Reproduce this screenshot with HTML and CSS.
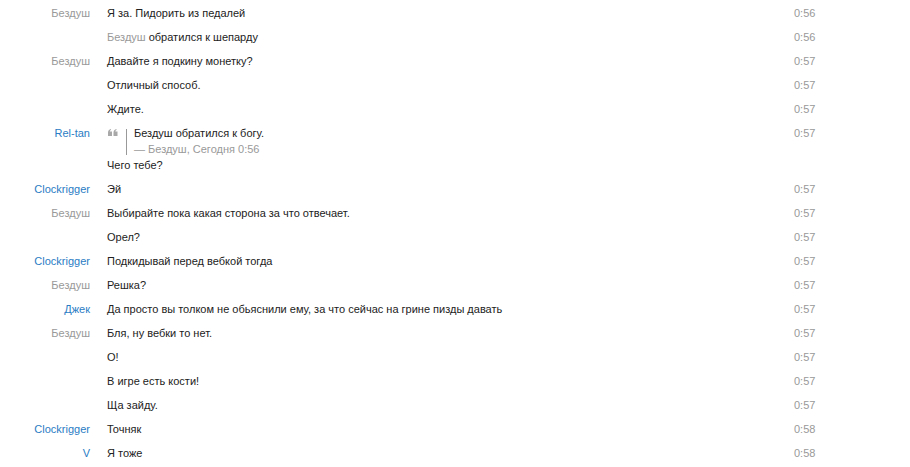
FILE: index.html
```html
<!DOCTYPE html>
<html>
<head>
<meta charset="utf-8">
<link rel="stylesheet" href="styles.css">
</head>
<body>
<div class="chat">
  <div class="row"><div class="name gray">Бездуш</div><div class="msg">Я за. Пидорить из педалей</div><div class="time">0:56</div></div>
  <div class="row"><div class="name"></div><div class="msg"><span class="gray">Бездуш</span> обратился к шепарду</div><div class="time">0:56</div></div>
  <div class="row"><div class="name gray">Бездуш</div><div class="msg">Давайте я подкину монетку?</div><div class="time">0:57</div></div>
  <div class="row"><div class="name"></div><div class="msg">Отличный способ.</div><div class="time">0:57</div></div>
  <div class="row"><div class="name"></div><div class="msg">Ждите.</div><div class="time">0:57</div></div>
  <div class="row"><div class="name blue">Rel-tan</div><div class="msg">
    <div class="quote">
      <div class="qicon"><svg width="10" height="7" viewBox="0 0 10 7"><path d="M0 3.5 Q0 0.5 3 0 L3 1 Q1.8 1.4 1.8 2.6 L4 2.6 L4 7 L0 7 Z M5.5 3.5 Q5.5 0.5 8.5 0 L8.5 1 Q7.3 1.4 7.3 2.6 L9.5 2.6 L9.5 7 L5.5 7 Z" fill="#a8a8a8"/></svg></div>
      <div class="qbody"><div class="qtext">Бездуш обратился к богу.</div><div class="qsrc">— Бездуш, Сегодня 0:56</div></div>
    </div>
    <div>Чего тебе?</div>
  </div><div class="time">0:57</div></div>
  <div class="row"><div class="name blue">Clockrigger</div><div class="msg">Эй</div><div class="time">0:57</div></div>
  <div class="row"><div class="name gray">Бездуш</div><div class="msg">Выбирайте пока какая сторона за что отвечает.</div><div class="time">0:57</div></div>
  <div class="row"><div class="name"></div><div class="msg">Орел?</div><div class="time">0:57</div></div>
  <div class="row"><div class="name blue">Clockrigger</div><div class="msg">Подкидывай перед вебкой тогда</div><div class="time">0:57</div></div>
  <div class="row"><div class="name gray">Бездуш</div><div class="msg">Решка?</div><div class="time">0:57</div></div>
  <div class="row"><div class="name blue">Джек</div><div class="msg">Да просто вы толком не обьяснили ему, за что сейчас на грине пизды давать</div><div class="time">0:57</div></div>
  <div class="row"><div class="name gray">Бездуш</div><div class="msg">Бля, ну вебки то нет.</div><div class="time">0:57</div></div>
  <div class="row"><div class="name"></div><div class="msg">О!</div><div class="time">0:57</div></div>
  <div class="row"><div class="name"></div><div class="msg">В игре есть кости!</div><div class="time">0:57</div></div>
  <div class="row"><div class="name"></div><div class="msg">Ща зайду.</div><div class="time">0:57</div></div>
  <div class="row"><div class="name blue">Clockrigger</div><div class="msg">Точняк</div><div class="time">0:58</div></div>
  <div class="row"><div class="name blue">V</div><div class="msg">Я тоже</div><div class="time">0:58</div></div>
</div>
</body>
</html>
```
FILE: styles.css
```css
html, body {
  margin: 0;
  padding: 0;
  background: #fff;
}
body {
  font-family: "Liberation Sans", Arial, sans-serif;
  font-size: 11px;
  line-height: 16px;
  color: #222;
}
.chat {
  padding-top: 1px;
}
.row {
  display: flex;
  padding: 4px 0;
}
.name {
  width: 90px;
  text-align: right;
  flex: none;
}
.gray { color: #999; }
.blue { color: #2a7cc4; }
.msg {
  margin-left: 17px;
  width: 687px;
  flex: none;
}
.time {
  color: #999;
  flex: none;
}
.quote {
  display: flex;
}
.qicon {
  width: 19px;
  flex: none;
  padding-top: 4px;
  padding-left: 1px;
  box-sizing: border-box;
}
.qicon svg { display: block; }
.qbody {
  border-left: 1px solid #999;
  padding-left: 7px;
  margin-top: 4px;
  margin-bottom: 2px;
  position: relative;
}
.qtext { margin-top: -4px; }
.qsrc { color: #999; margin-bottom: -2px; }
```
